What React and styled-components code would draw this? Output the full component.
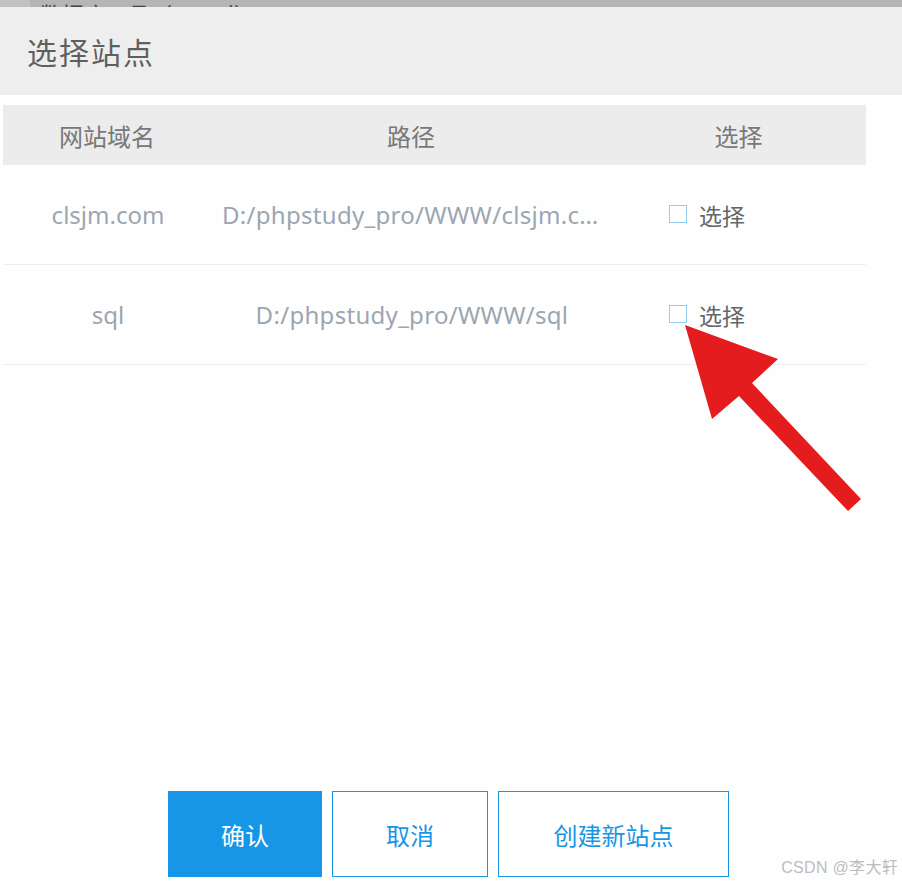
import React from "react";
import styled, { createGlobalStyle } from "styled-components";

const Global = createGlobalStyle`
  html, body { margin: 0; padding: 0; background: #fefefe; }
  body { font-family: "Noto Sans", "Noto Sans CJK SC", sans-serif; }
  * { box-sizing: border-box; }
`;

const Page = styled.div`
  position: relative;
  width: 902px;
  height: 884px;
  display: flex;
  flex-direction: column;
  overflow: hidden;
  background: #fefefe;
`;

const TopStrip = styled.div`
  height: 7px;
  flex: none;
  background: #b5b5b5;
  display: flex;
  align-items: flex-start;
  overflow: hidden;
`;

const StripTab = styled.div`
  width: 30px;
  height: 7px;
  background: #c2c2c2;
  flex: none;
`;

const StripText = styled.span`
  font-family: "Noto Sans CJK SC", sans-serif;
  font-size: 22px;
  line-height: 22px;
  padding-top: 2px;
  color: #444;
  margin-left: 10px;
  white-space: nowrap;
`;

const Header = styled.div`
  height: 88px;
  flex: none;
  background: #eeeeee;
  display: flex;
  align-items: center;
  padding-left: 27px;
`;

const Title = styled.h1`
  margin: 0;
  font-family: "Noto Sans CJK SC", sans-serif;
  font-weight: 400;
  font-size: 30px;
  color: #5f5f5f;
  letter-spacing: 2px;
`;

const Body = styled.div`
  padding: 10px 0 0 3px;
`;

const Table = styled.div`
  width: 863px;
  display: grid;
  grid-template-columns: 208px 400px 255px;
`;

const HeadCell = styled.div`
  height: 60px;
  background: #ececec;
  display: flex;
  align-items: center;
  justify-content: center;
  font-family: "Noto Sans CJK SC", sans-serif;
  font-size: 24px;
  color: #787878;
`;

const Cell = styled.div`
  height: 100px;
  border-bottom: 1px solid #ededed;
  display: flex;
  align-items: center;
  justify-content: ${(p) => (p.$left ? "flex-start" : "center")};
  padding: ${(p) => (p.$left ? "0 0 0 58px" : "0 9px 0 11px")};
  font-size: 24px;
  color: #9ba6b1;
  min-width: 0;
`;

const Ellipsis = styled.span`
  white-space: nowrap;
  overflow: hidden;
  text-overflow: ellipsis;
  min-width: 0;
  letter-spacing: 0.3px;
`;

const Check = styled.label`
  display: flex;
  align-items: center;
  gap: 12px;
  font-family: "Noto Sans CJK SC", sans-serif;
  font-size: 23px;
  color: #666;
`;

const Box = styled.span`
  width: 18px;
  height: 18px;
  border: 1.5px solid #92cdf2;
  background: #fff;
  display: inline-block;
  margin-top: -2px;
`;

const Spacer = styled.div`
  flex: 1;
`;

const ButtonBar = styled.div`
  display: flex;
  gap: 10px;
  padding: 0 0 7px 168px;
`;

const Button = styled.button`
  height: 86px;
  width: ${(p) => p.$w}px;
  border: 1px solid #1795e6;
  background: ${(p) => (p.$primary ? "#1795e6" : "#fff")};
  color: ${(p) => (p.$primary ? "#fff" : "#1795e6")};
  font-family: "Noto Sans CJK SC", sans-serif;
  font-size: 24px;
  padding: 0;
  cursor: pointer;
`;

const Watermark = styled.div`
  position: absolute;
  right: 4px;
  bottom: 6px;
  font-family: "Liberation Sans", "Noto Sans CJK SC", sans-serif;
  font-size: 16px;
  letter-spacing: 0.3px;
  color: #bdbdbd;
  white-space: nowrap;
`;

const ArrowLayer = styled.svg`
  position: absolute;
  left: 0;
  top: 0;
  pointer-events: none;
`;

const rows = [
  { domain: "clsjm.com", path: "D:/phpstudy_pro/WWW/clsjm.com" },
  { domain: "sql", path: "D:/phpstudy_pro/WWW/sql" },
];

export default function App() {
  return (
    <>
      <Global />
      <Page>
        <TopStrip>
          <StripTab />
          <StripText>数据库工具（mysql）</StripText>
        </TopStrip>
        <Header>
          <Title>选择站点</Title>
        </Header>
        <Body>
          <Table>
            <HeadCell>网站域名</HeadCell>
            <HeadCell>路径</HeadCell>
            <HeadCell>选择</HeadCell>
            {rows.map((r) => (
              <React.Fragment key={r.domain}>
                <Cell>{r.domain}</Cell>
                <Cell>
                  <Ellipsis>{r.path}</Ellipsis>
                </Cell>
                <Cell $left>
                  <Check>
                    <Box />
                    选择
                  </Check>
                </Cell>
              </React.Fragment>
            ))}
          </Table>
        </Body>
        <Spacer />
        <ButtonBar>
          <Button $primary $w={154}>确认</Button>
          <Button $w={156}>取消</Button>
          <Button $w={231}>创建新站点</Button>
        </ButtonBar>
        <Watermark>CSDN @李大轩</Watermark>
        <ArrowLayer width="902" height="884" viewBox="0 0 902 884">
          <polygon
            points="685,325 778,359 752,383 861,499 848,511 739,396 712,419"
            fill="#e51c1d"
          />
        </ArrowLayer>
      </Page>
    </>
  );
}
